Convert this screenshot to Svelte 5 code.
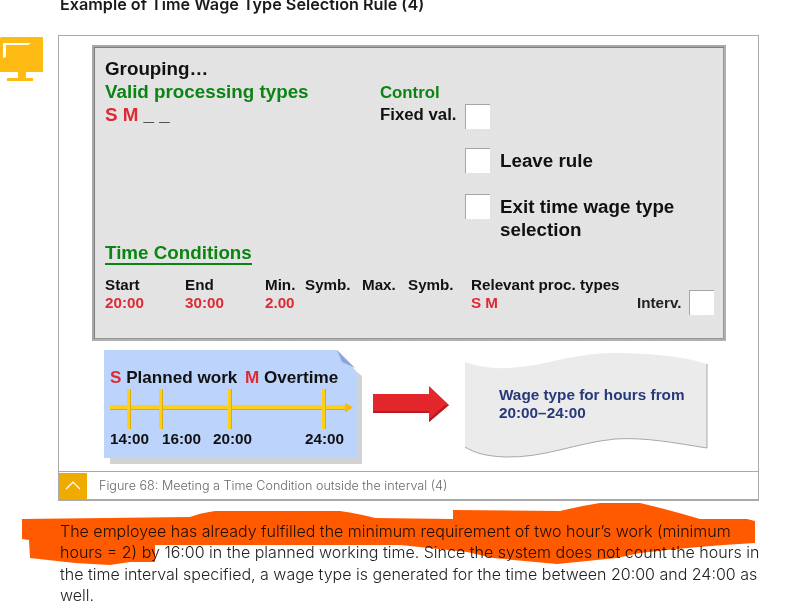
<script>
	const columns = [
		{ head: 'Start', value: '20:00' },
		{ head: 'End', value: '30:00' },
		{ head: 'Min.', value: '2.00' },
		{ head: 'Symb.', value: '' },
		{ head: 'Max.', value: '' },
		{ head: 'Symb.', value: '' },
		{ head: 'Relevant proc. types', value: 'S M' }
	];
	const ticks = [129, 161, 230, 324];
	const times = ['14:00', '16:00', '20:00', '24:00'];
</script>

<div class="page">
	<aside class="side">
		<svg class="monitor" width="43" height="44" viewBox="0 0 43 44">
			<path d="M1 0H43V35H0V1Z M18 35h8v6h7v3H7v-3h11Z" fill="#fdbb13" />
			<path d="M3 6H31L28 8H6V20L3 21Z" fill="#fff" />
		</svg>
	</aside>

	<main class="content">
		<h2>Example of Time Wage Type Selection Rule (4)</h2>

		<figure>
			<div class="diagram">
				<section class="panel">
					<div class="top">
						<div class="left">
							<div class="big">Grouping…</div>
							<div class="big green">Valid processing types</div>
							<div class="big"><span class="red">S M</span> _ _</div>
						</div>
						<div class="right">
							<div class="control green">Control</div>
							<div class="fixed">
								<span>Fixed val.</span>
								<i class="box"></i>
							</div>
							<div class="check leave">
								<i class="box"></i>
								<span>Leave rule</span>
							</div>
							<div class="check exit">
								<i class="box"></i>
								<span>Exit time wage type<br />selection</span>
							</div>
						</div>
					</div>
					<div class="conditions green">Time Conditions</div>
					<div class="table">
						{#each columns as col}
							<div class="col">
								<span>{col.head}</span>
								<span class="red">{col.value}&nbsp;</span>
							</div>
						{/each}
						<div class="interv">
							<span>Interv.</span>
							<i class="box"></i>
						</div>
					</div>
				</section>

				<div class="lower">
					<div class="note">
						<svg class="note-bg" width="258" height="114" viewBox="0 0 258 114">
							<path d="M6 108H253V22L258 26V114H6Z" fill="#d2d2d2" />
							<path d="M0 0H233L253 22V108H0Z" fill="#bcd3fb" />
							<path d="M233 0L251 18L238 12Z" fill="#8ca6d6" />
						</svg>
						<div class="note-title">
							<span class="red">S</span> Planned work <span class="gap red">M</span> Overtime
						</div>
						<svg class="line" width="253" height="42" viewBox="0 0 253 42">
							<rect x="6" y="16" width="236" height="4" fill="#fdd017" />
							<rect x="6" y="20" width="236" height="1" fill="#dca81c" />
							<path d="M241 13.5L249 18.5L241 23.5Z" fill="#f2bd10" />
							{#each ticks as t}
								<rect x={t - 106} y="0" width="3" height="40" fill="#fdd017" />
								<rect x={t - 103} y="0" width="1" height="40" fill="#dca81c" />
							{/each}
						</svg>
						<div class="times">
							{#each times as t}
								<span>{t}</span>
							{/each}
						</div>
					</div>

					<svg class="arrow" width="77" height="37" viewBox="0 0 77 37">
						<path d="M0 8H56V0L76 19L56 36V27H0Z" fill="#e3262b" />
						<path d="M0 25H56V27H0Z M56 36V33L72 19H76Z" fill="#b71c20" />
					</svg>

					<div class="wave">
						<svg class="wave-bg" width="243" height="106" viewBox="0 0 243 106">
							<path d="M0 9C20 16 40 17 70 12C100 6 120 0 150 0C190 0 220 4 242 11V95C210 90 180 84 150 86C110 90 80 105 40 104C20 103 10 100 0 94Z" fill="#ebebeb" />
							<path d="M242 11V95C210 90 180 84 150 86C110 90 80 105 40 104C20 103 10 100 0 94" fill="none" stroke="#a8a8a8" />
						</svg>
						<p>Wage type for hours from<br />20:00–24:00</p>
					</div>
				</div>
			</div>

			<figcaption>
				<span class="toggle">
					<svg width="16" height="9" viewBox="0 0 16 9">
						<path d="M1 8L8 1L15 8" fill="none" stroke="#fff" stroke-width="1.2" />
					</svg>
				</span>
				<span>Figure 68: Meeting a Time Condition outside the interval (4)</span>
			</figcaption>
		</figure>

		<p class="body">
			The employee has already fulfilled the minimum requirement of two hour’s work (minimum<br />
			hours = 2) by 16:00 in the planned working time. Since the system does not count the hours in<br />
			the time interval specified, a wage type is generated for the time between 20:00 and 24:00 as<br />
			well.
		</p>
	</main>

	<svg class="scribble" width="787" height="605" viewBox="0 0 787 605">
		<path
			d="M22 519L190 517Q200 513 215 511L340 511Q360 514 375 518L453 519L453 510L560 511Q580 506 600 503L640 503Q670 510 700 519L747 519L755 521L755 543Q700 546 640 553L617 558L557 564L493 558L467 552L400 545L155 545L155 562L130 562L110 565L75 563L30 558L29 540L22 539Z"
			fill="#ff5a00"
		/>
	</svg>
</div>

<style>
	:global(body) {
		margin: 0;
		background: #fff;
		overflow: hidden;
	}
	.page {
		position: relative;
		display: grid;
		grid-template-columns: 58px 701px;
		height: 605px;
		overflow: hidden;
		font-family: 'Inter', 'Liberation Sans', sans-serif;
		color: #222;
	}
	.side {
		padding-top: 37px;
	}
	.monitor {
		display: block;
	}
	h2 {
		margin: -6px 0 0 2px;
		height: 41px;
		font-size: 16.2px;
		line-height: 20px;
		font-weight: 600;
		color: #1a1a1a;
		white-space: nowrap;
	}
	figure {
		margin: 0;
		border: 1px solid #aaa;
		border-bottom-width: 2px;
		height: 466px;
		box-sizing: border-box;
		display: flex;
		flex-direction: column;
	}
	.diagram {
		flex: 1;
		padding: 9px 0 0 33px;
		font-family: 'Liberation Sans', Arial, sans-serif;
		font-weight: 700;
		color: #111;
	}
	.panel {
		width: 634px;
		height: 296px;
		box-sizing: border-box;
		border: 2px solid #a8a8a8;
		border-right-color: #b0b0b0;
		border-bottom-color: #b0b0b0;
		box-shadow:
			inset 1px 1px 0 #808080,
			inset -1px -1px 0 #989898;
		background: repeating-conic-gradient(#e2e2e2 0 25%, #e5e5e5 0 50%) 0 0 / 3px 3px;
		padding: 10px 0 0 11px;
	}
	.top {
		display: flex;
	}
	.left {
		width: 275px;
	}
	.big {
		font-size: 18.8px;
		line-height: 23px;
	}
	.green {
		color: #0c8414;
	}
	.red {
		color: #dd2a35;
	}
	.right {
		font-size: 16.8px;
		line-height: 23px;
	}
	.control {
		margin-top: 24px;
		line-height: 23px;
	}
	.fixed {
		display: flex;
		align-items: flex-start;
		height: 25px;
		line-height: 20px;
	}
	.fixed span {
		width: 85px;
		padding-top: 1px;
	}
	.box {
		display: block;
		width: 25px;
		height: 25px;
		box-sizing: border-box;
		background: #fff;
		border-top: 1px solid #a5a5a5;
		border-left: 1px solid #a5a5a5;
		flex: none;
	}
	.check {
		display: flex;
		gap: 10px;
		margin-left: 85px;
		font-size: 18.8px;
		line-height: 23px;
	}
	.leave {
		margin-top: 19px;
	}
	.leave span {
		padding-top: 1px;
	}
	.exit {
		margin-top: 21px;
	}
	.exit span {
		padding-top: 1px;
	}
	.conditions {
		width: max-content;
		margin-top: 1px;
		font-size: 18.8px;
		line-height: 21px;
		border-bottom: 2px solid #0c8414;
	}
	.table {
		display: grid;
		grid-template-columns: 80px 80px 40px 57px 46px 63px 166px auto;
		margin-top: 11px;
		font-size: 15.2px;
		line-height: 18px;
		align-items: start;
	}
	.col {
		display: flex;
		flex-direction: column;
		white-space: nowrap;
	}
	.interv {
		display: flex;
		align-items: center;
		gap: 8px;
		margin-top: 14px;
		color: #222;
	}
	.lower {
		display: flex;
		margin-top: 9px;
		padding-left: 12px;
	}
	.note {
		position: relative;
		width: 258px;
		height: 114px;
		flex: none;
	}
	.note-bg {
		position: absolute;
		left: 0;
		top: 0;
	}
	.note-title,
	.line,
	.times {
		position: relative;
	}
	.note-title {
		padding: 18px 0 0 6px;
		font-size: 17.1px;
		line-height: 20px;
		white-space: nowrap;
	}
	.gap {
		margin-left: 3px;
	}
	.line {
		display: block;
		margin-top: 1px;
	}
	.times {
		display: grid;
		grid-template-columns: 52px 51px 92px auto;
		padding-left: 6px;
		margin-top: -1px;
		font-size: 15.3px;
		line-height: 18px;
	}
	.arrow {
		flex: none;
		margin: 36px 0 0 11px;
	}
	.wave {
		position: relative;
		width: 243px;
		height: 106px;
		margin: 3px 0 0 15px;
		flex: none;
	}
	.wave-bg {
		position: absolute;
		left: 0;
		top: 0;
	}
	.wave p {
		position: relative;
		margin: 0;
		padding: 33px 0 0 34px;
		font-size: 15.3px;
		line-height: 18px;
		color: #27397a;
		white-space: nowrap;
	}
	figcaption {
		display: flex;
		align-items: center;
		gap: 12px;
		height: 28px;
		box-sizing: border-box;
		border-top: 1px solid #aaa;
		font-size: 12.6px;
		font-weight: 300;
		color: #666a6e;
	}
	.toggle {
		width: 28px;
		height: 26px;
		background: #f0ab00;
		display: flex;
		align-items: center;
		justify-content: center;
	}
	.body {
		margin: 20px 0 0 2px;
		font-size: 16px;
		font-weight: 300;
		line-height: 21.4px;
		color: #222;
		white-space: nowrap;
	}
	.scribble {
		position: absolute;
		left: 0;
		top: 0;
		mix-blend-mode: multiply;
		pointer-events: none;
	}
</style>
